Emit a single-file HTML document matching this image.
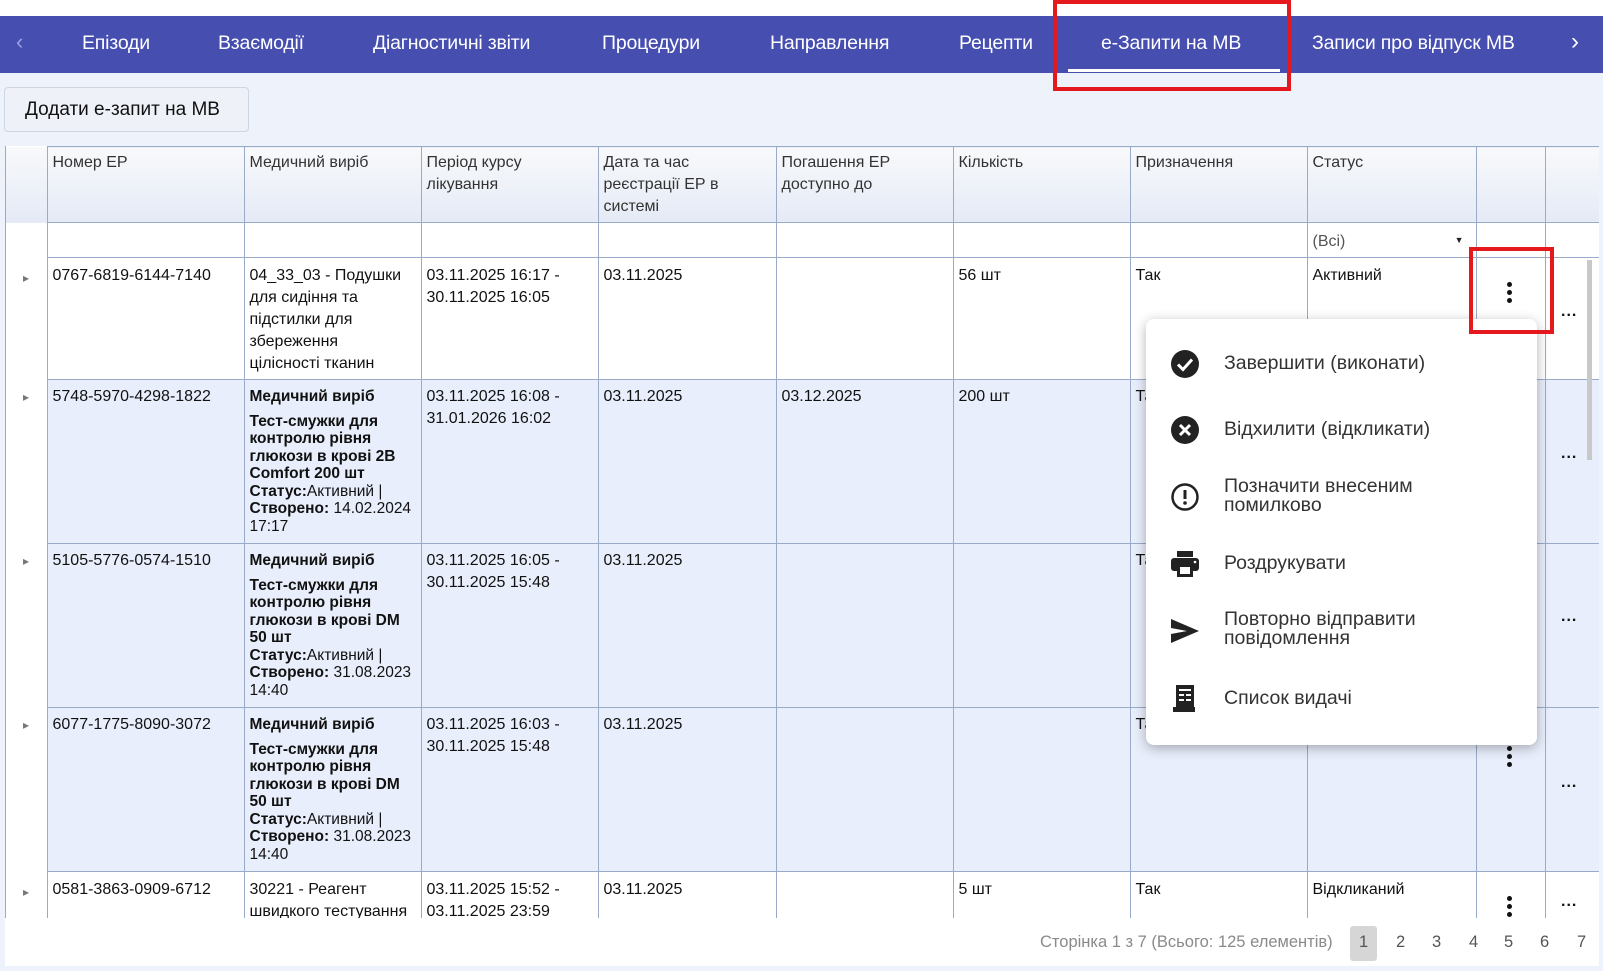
<!DOCTYPE html>
<html><head><meta charset="utf-8">
<style>
*{box-sizing:border-box;margin:0;padding:0}
body{width:1603px;height:971px;background:#eef2fa;font-family:"Liberation Sans",sans-serif;position:relative;overflow:hidden;color:#111}
.top{position:absolute;left:0;top:0;width:1603px;height:16px;background:#fff}
.nav{position:absolute;left:0;top:16px;width:1603px;height:57px;background:#464eb0;color:#fff;font-size:19.5px}
.nav span{position:absolute;top:16px;white-space:nowrap;letter-spacing:-0.2px}
.uline{position:absolute;left:1068px;top:69px;width:212px;height:3px;background:#fff}
.red{position:absolute;border:4px solid #e3191e}
.btn{position:absolute;left:4px;top:87px;width:245px;height:45px;border:1px solid #d0d6e0;border-radius:4px;background:#eef2f8;font-size:19px;line-height:43px;padding-left:20px}
.wrap{position:absolute;left:5px;top:146px;width:1594px;height:772px;overflow:hidden;background:#fff;border-left:1px solid #9aabc9}
table{border-collapse:collapse;table-layout:fixed;width:1594px;font-size:16px}
td{border:1px solid #9aabc9;vertical-align:top;padding:7px 5px 0;line-height:22px}
tr.h td{height:76px;background:linear-gradient(#f8f9fb,#e4eaf6);color:#333;line-height:22px;padding-top:5px}
tr.f td{height:35px;background:#fff}
td.ex{border-left:none;border-right:none;border-top:none;border-bottom:none;background:#fff!important;color:#777;font-size:12px;padding-left:17px;padding-top:9px}
tr.b td{background:#e8eefb;padding-top:6px}
.bb{font-weight:bold;line-height:17.5px;font-size:15.5px}
.sm{line-height:17.5px;font-size:15.5px}
.kb{position:absolute;width:5px}
.kb i{display:block;width:5px;height:5px;border-radius:50%;background:#111;margin-bottom:3px}
.dd{position:absolute;font-size:16px;font-weight:bold;letter-spacing:1px}
.menu{position:absolute;left:1146px;top:319px;width:391px;height:426px;background:#fff;border-radius:8px;box-shadow:0 3px 12px rgba(0,0,0,.3);font-size:19.5px;color:#333}
.mi{position:absolute;left:78px;line-height:19px}
.ic{position:absolute;left:24px}
.pager{position:absolute;left:5px;top:918px;width:1594px;height:48px;background:#fff;font-size:16.5px;color:#888}
.pager span{position:absolute;top:15px;color:#555}
.sb{position:absolute;left:1587px;top:260px;width:5px;height:200px;background:#c8c8c8}
</style></head><body>
<div class="top"></div>
<div class="nav">
<span style="left:16px;color:#9aa0d8;font-size:22px;top:13px">&#8249;</span>
<span style="left:82px">Епізоди</span>
<span style="left:218px">Взаємодії</span>
<span style="left:373px">Діагностичні звіти</span>
<span style="left:602px">Процедури</span>
<span style="left:770px">Направлення</span>
<span style="left:959px">Рецепти</span>
<span style="left:1101px">е-Запити на МВ</span>
<span style="left:1312px">Записи про відпуск МВ</span>
<span style="left:1571px;font-size:24px;top:12px">&#8250;</span>
</div>
<div class="uline"></div>
<div class="btn">Додати е-запит на МВ</div>

<div class="wrap">
<table>
<colgroup><col style="width:41px"><col style="width:197px"><col style="width:177px"><col style="width:177px"><col style="width:178px"><col style="width:177px"><col style="width:177px"><col style="width:177px"><col style="width:169px"><col style="width:69px"><col style="width:55px"></colgroup>
<tr class="h"><td class="ex" style="background:linear-gradient(#f8f9fb,#e4eaf6)!important"></td><td>Номер ЕР</td><td>Медичний виріб</td><td>Період курсу<br>лікування</td><td>Дата та час<br>реєстрації ЕР в<br>системі</td><td>Погашення ЕР<br>доступно до</td><td>Кількість</td><td>Призначення</td><td>Статус</td><td></td><td></td></tr>
<tr class="f"><td class="ex"></td><td></td><td></td><td></td><td></td><td></td><td></td><td></td><td style="color:#555;padding-top:8px;position:relative">(Всі)<span style="position:absolute;right:12px;top:6px;font-size:9px;color:#222">&#9660;</span></td><td></td><td></td></tr>
<tr style="height:122px"><td class="ex">&#9656;</td><td>0767-6819-6144-7140</td><td>04_33_03 - Подушки<br>для сидіння та<br>підстилки для<br>збереження<br>цілісності тканин</td><td>03.11.2025 16:17 -<br>30.11.2025 16:05</td><td>03.11.2025</td><td></td><td>56 шт</td><td>Так</td><td>Активний</td><td></td><td></td></tr>
<tr class="b" style="height:164px"><td class="ex">&#9656;</td><td>5748-5970-4298-1822</td><td><div class="bb" style="margin-bottom:7px;margin-top:2px">Медичний виріб</div><div class="bb">Тест-смужки для контролю рівня глюкози в крові 2B Comfort 200 шт</div><div class="sm"><b>Статус:</b>Активний | <b>Створено:</b> 14.02.2024 17:17</div></td><td>03.11.2025 16:08 -<br>31.01.2026 16:02</td><td>03.11.2025</td><td>03.12.2025</td><td>200 шт</td><td>Так</td><td></td><td></td><td></td></tr>
<tr class="b" style="height:164px"><td class="ex">&#9656;</td><td>5105-5776-0574-1510</td><td><div class="bb" style="margin-bottom:7px;margin-top:2px">Медичний виріб</div><div class="bb">Тест-смужки для контролю рівня глюкози в крові DM 50 шт</div><div class="sm"><b>Статус:</b>Активний | <b>Створено:</b> 31.08.2023 14:40</div></td><td>03.11.2025 16:05 -<br>30.11.2025 15:48</td><td>03.11.2025</td><td></td><td></td><td>Так</td><td></td><td></td><td></td></tr>
<tr class="b" style="height:164px"><td class="ex">&#9656;</td><td>6077-1775-8090-3072</td><td><div class="bb" style="margin-bottom:7px;margin-top:2px">Медичний виріб</div><div class="bb">Тест-смужки для контролю рівня глюкози в крові DM 50 шт</div><div class="sm"><b>Статус:</b>Активний | <b>Створено:</b> 31.08.2023 14:40</div></td><td>03.11.2025 16:03 -<br>30.11.2025 15:48</td><td>03.11.2025</td><td></td><td></td><td>Так</td><td></td><td></td><td></td></tr>
<tr style="height:80px"><td class="ex">&#9656;</td><td>0581-3863-0909-6712</td><td>30221 - Реагент<br>швидкого тестування</td><td>03.11.2025 15:52 -<br>03.11.2025 23:59</td><td>03.11.2025</td><td></td><td>5 шт</td><td>Так</td><td>Відкликаний</td><td></td><td></td></tr>
</table>
</div>
<div class="sb"></div>

<div class="kb" style="left:1507px;top:282px"><i></i><i></i><i></i></div>
<div class="kb" style="left:1507px;top:746px"><i></i><i></i><i></i></div>
<div class="kb" style="left:1507px;top:896px"><i></i><i></i><i></i></div>
<div class="dd" style="left:1561px;top:303px">...</div>
<div class="dd" style="left:1561px;top:445px">...</div>
<div class="dd" style="left:1561px;top:608px">...</div>
<div class="dd" style="left:1561px;top:774px">...</div>
<div class="dd" style="left:1561px;top:893px">...</div>

<div class="pager">
<span style="left:1035px;color:#8a8a8a">Сторінка 1 з 7 (Всього: 125 елементів)</span>
<div style="position:absolute;left:1345px;top:8px;width:27px;height:35px;background:#d6d6d6;border-radius:3px"></div>
<span style="left:1354px">1</span><span style="left:1391px">2</span><span style="left:1427px">3</span><span style="left:1464px">4</span><span style="left:1499px">5</span><span style="left:1535px">6</span><span style="left:1572px">7</span>
</div>

<div class="menu">
<svg class="ic" style="top:30px" width="30" height="30" viewBox="0 0 30 30"><circle cx="15" cy="15" r="14" fill="#222"/><path d="M8 15.5l5 5 9-10" stroke="#fff" stroke-width="3" fill="none"/></svg>
<div class="mi" style="top:35px">Завершити (виконати)</div>
<svg class="ic" style="top:96px" width="30" height="30" viewBox="0 0 30 30"><circle cx="15" cy="15" r="14" fill="#222"/><path d="M10 10l10 10M20 10l-10 10" stroke="#fff" stroke-width="3"/></svg>
<div class="mi" style="top:101px">Відхилити (відкликати)</div>
<svg class="ic" style="top:163px" width="30" height="30" viewBox="0 0 30 30"><circle cx="15" cy="15" r="12.5" fill="none" stroke="#222" stroke-width="2.5"/><path d="M15 8v9" stroke="#222" stroke-width="3"/><circle cx="15" cy="21" r="1.8" fill="#222"/></svg>
<div class="mi" style="top:158px">Позначити внесеним<br>помилково</div>
<svg class="ic" style="top:231px" width="30" height="28" viewBox="0 0 30 28"><rect x="7" y="1" width="16" height="6" fill="#222"/><rect x="1" y="8" width="28" height="13" rx="3" fill="#222"/><rect x="7" y="15" width="16" height="12" fill="#222"/><rect x="10" y="17" width="10" height="7" fill="#fff"/><circle cx="25" cy="12" r="1.3" fill="#fff"/></svg>
<div class="mi" style="top:235px">Роздрукувати</div>
<svg class="ic" style="top:299px" width="30" height="26" viewBox="0 0 30 26"><path d="M1 1l28 12L1 25V16l16-3L1 10z" fill="#222"/></svg>
<div class="mi" style="top:291px">Повторно відправити<br>повідомлення</div>
<svg class="ic" style="top:364px" width="30" height="30" viewBox="0 0 30 30"><path d="M6 2h18v24H6z" fill="#222"/><path d="M3 24h22v5H3z" fill="#222"/><rect x="9" y="6" width="12" height="2" fill="#fff"/><rect x="9" y="11" width="5" height="2" fill="#fff"/><rect x="16" y="11" width="5" height="2" fill="#fff"/><rect x="9" y="16" width="5" height="2" fill="#fff"/><rect x="16" y="16" width="5" height="2" fill="#fff"/></svg>
<div class="mi" style="top:370px">Список видачі</div>
</div>

<div class="red" style="left:1053px;top:0;width:238px;height:91px"></div>
<div class="red" style="left:1469px;top:247px;width:85px;height:87px"></div>
</body></html>
